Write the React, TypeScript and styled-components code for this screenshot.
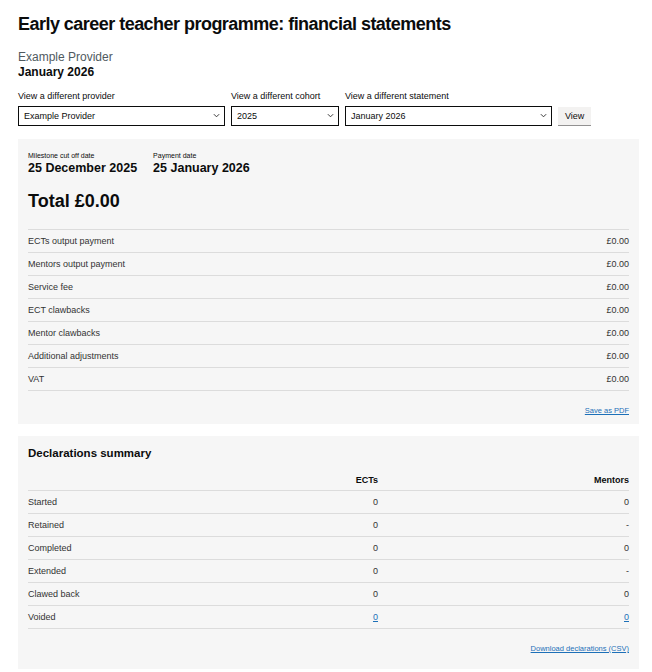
import React from "react";
import styled, { createGlobalStyle } from "styled-components";

const GlobalStyle = createGlobalStyle`
  body {
    margin: 0;
    background: #ffffff;
    font-family: "Liberation Sans", Arial, sans-serif;
    color: #0b0c0c;
  }
`;

const payments = [
  "ECTs output payment",
  "Mentors output payment",
  "Service fee",
  "ECT clawbacks",
  "Mentor clawbacks",
  "Additional adjustments",
  "VAT",
];

const declarations = [
  { name: "Started", ects: "0", mentors: "0" },
  { name: "Retained", ects: "0", mentors: "-" },
  { name: "Completed", ects: "0", mentors: "0" },
  { name: "Extended", ects: "0", mentors: "-" },
  { name: "Clawed back", ects: "0", mentors: "0" },
  { name: "Voided", ects: "0", mentors: "0", link: true },
];

function Chevron() {
  return (
    <ChevronIcon viewBox="0 0 8 5" width="7" height="5">
      <path d="M1 1 L4 4 L7 1" fill="none" stroke="#333" strokeWidth="1.1" />
    </ChevronIcon>
  );
}

function App() {
  return (
    <Page>
      <GlobalStyle />
      <Title>Early career teacher programme: financial statements</Title>
      <Caption>Example Provider</Caption>
      <SubTitle>January 2026</SubTitle>

      <Filters>
        <Field width={207}>
          <Label>View a different provider</Label>
          <SelectWrap>
            <Select defaultValue="Example Provider">
              <option>Example Provider</option>
            </Select>
            <Chevron />
          </SelectWrap>
        </Field>
        <Field width={108}>
          <Label>View a different cohort</Label>
          <SelectWrap>
            <Select defaultValue="2025">
              <option>2025</option>
            </Select>
            <Chevron />
          </SelectWrap>
        </Field>
        <Field width={207}>
          <Label>View a different statement</Label>
          <SelectWrap>
            <Select defaultValue="January 2026">
              <option>January 2026</option>
            </Select>
            <Chevron />
          </SelectWrap>
        </Field>
        <ViewButton type="button">View</ViewButton>
      </Filters>

      <Card>
        <Dates>
          <DateBlock>
            <DateLabel>Milestone cut off date</DateLabel>
            <DateValue>25 December 2025</DateValue>
          </DateBlock>
          <DateBlock>
            <DateLabel>Payment date</DateLabel>
            <DateValue>25 January 2026</DateValue>
          </DateBlock>
        </Dates>
        <Total>Total £0.00</Total>
        <Table topLine>
          {payments.map((p) => (
            <PaymentRow key={p}>
              <Cell>{p}</Cell>
              <Cell align="right">£0.00</Cell>
            </PaymentRow>
          ))}
        </Table>
        <Footer>
          <SmallLink href="#">Save as PDF</SmallLink>
        </Footer>
      </Card>

      <Card second>
        <CardHeading>Declarations summary</CardHeading>
        <Table>
          <HeadRow>
            <HeadCell />
            <HeadCell align="right">ECTs</HeadCell>
            <HeadCell align="right">Mentors</HeadCell>
          </HeadRow>
          {declarations.map((d) => (
            <DeclRow key={d.name}>
              <Cell>{d.name}</Cell>
              <Cell align="right">
                {d.link ? <CellLink href="#">{d.ects}</CellLink> : d.ects}
              </Cell>
              <Cell align="right">
                {d.link ? <CellLink href="#">{d.mentors}</CellLink> : d.mentors}
              </Cell>
            </DeclRow>
          ))}
        </Table>
        <Footer>
          <SmallLink href="#">Download declarations (CSV)</SmallLink>
        </Footer>
      </Card>
    </Page>
  );
}

export default App;

const Page = styled.div`
  width: 621px;
  padding: 12px 0 0 18px;
`;

const Title = styled.h1`
  margin: 0;
  font-size: 18px;
  line-height: 24px;
  font-weight: 700;
  letter-spacing: -0.53px;
`;

const Caption = styled.div`
  margin-top: 14px;
  font-size: 12px;
  line-height: 15px;
  color: #505a5f;
`;

const SubTitle = styled.div`
  font-size: 12px;
  line-height: 15px;
  font-weight: 700;
`;

const Filters = styled.div`
  display: flex;
  align-items: flex-end;
  gap: 6px;
  margin-top: 10px;
`;

const Field = styled.div<{ width: number }>`
  display: flex;
  flex-direction: column;
  width: ${(p) => p.width}px;
`;

const Label = styled.label`
  font-size: 9px;
  line-height: 12px;
  color: #0b0c0c;
  margin-bottom: 3px;
`;

const SelectWrap = styled.div`
  position: relative;
`;

const Select = styled.select`
  appearance: none;
  width: 100%;
  height: 20px;
  box-sizing: border-box;
  border: 1px solid #0b0c0c;
  border-radius: 0;
  background: #ffffff;
  padding: 0 14px 0 5px;
  font-family: "Liberation Sans", Arial, sans-serif;
  font-size: 9px;
  color: #0b0c0c;
`;

const ChevronIcon = styled.svg`
  position: absolute;
  right: 5px;
  top: 8px;
  pointer-events: none;
`;

const ViewButton = styled.button`
  height: 18px;
  margin-bottom: 1px;
  padding: 0 7px;
  border: 0;
  background: #f3f2f1;
  box-shadow: 0 1px 0 #929191;
  font-family: "Liberation Sans", Arial, sans-serif;
  font-size: 9px;
  color: #0b0c0c;
`;

const Card = styled.section<{ second?: boolean }>`
  margin-top: ${(p) => (p.second ? 12 : 13)}px;
  background: #f6f6f6;
  padding: ${(p) => (p.second ? "10px 10px 14px" : "12px 10px 7px")};
`;

const Dates = styled.div`
  display: flex;
  gap: 16px;
`;

const DateBlock = styled.div`
  display: flex;
  flex-direction: column;
`;

const DateLabel = styled.div`
  font-size: 7px;
  line-height: 10px;
  color: #0b0c0c;
`;

const DateValue = styled.div`
  font-size: 12.5px;
  line-height: 15px;
  font-weight: 700;
`;

const Total = styled.div`
  margin-top: 14px;
  font-size: 18px;
  line-height: 22px;
  font-weight: 700;
`;

const Table = styled.div<{ topLine?: boolean }>`
  margin-top: ${(p) => (p.topLine ? 17 : 9)}px;
  border-top: ${(p) => (p.topLine ? "1px solid #dcdcdc" : "0")};
`;

const PaymentRow = styled.div`
  display: grid;
  grid-template-columns: 1fr auto;
  height: 22px;
  align-items: center;
  border-bottom: 1px solid #dcdcdc;
`;

const DeclRow = styled.div`
  display: grid;
  grid-template-columns: 200px 150px 1fr;
  height: 22px;
  align-items: center;
  border-bottom: 1px solid #dcdcdc;
`;

const HeadRow = styled(DeclRow)`
  height: 21px;
`;

const Cell = styled.div<{ align?: "right" }>`
  font-size: 9px;
  color: #333333;
  text-align: ${(p) => p.align || "left"};
`;

const HeadCell = styled.div<{ align?: "right" }>`
  font-size: 9px;
  font-weight: 700;
  color: #0b0c0c;
  text-align: ${(p) => p.align || "left"};
`;

const CellLink = styled.a`
  color: #1d70b8;
  text-decoration: underline;
`;

const CardHeading = styled.h2`
  margin: 0;
  font-size: 11.5px;
  line-height: 14px;
  font-weight: 700;
`;

const Footer = styled.div`
  display: flex;
  justify-content: flex-end;
  margin-top: 14px;
  line-height: 12px;
`;

const SmallLink = styled.a`
  font-size: 7.5px;
  color: #1d70b8;
  text-decoration: underline;
`;
